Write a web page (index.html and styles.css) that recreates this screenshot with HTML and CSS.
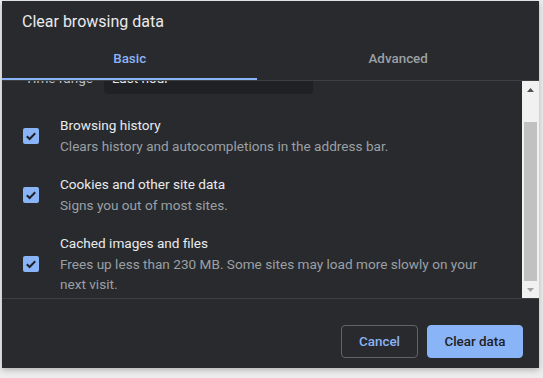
FILE: index.html
```html
<!DOCTYPE html>
<html>
<head>
<meta charset="utf-8">
<link rel="stylesheet" href="styles.css">
</head>
<body>
<div class="dialog">
  <div class="header">Clear browsing data</div>
  <div class="tabs">
    <div class="tab active">Basic</div>
    <div class="tab">Advanced</div>
  </div>
  <div class="scroll-area">
    <div class="viewport">
      <div class="content">
        <div class="time-row">
          <span class="time-label">Time range</span>
          <div class="select">Last hour</div>
        </div>
        <div class="row">
          <svg class="checkbox" width="16" height="16" viewBox="0 0 16 16"><rect x="0" y="0" width="16" height="16" rx="2" fill="#8ab4f8"/><path d="M3.8 8.2 L6.6 11 L12.2 5.2" fill="none" stroke="#202124" stroke-width="2"/></svg>
          <div class="text">
            <div class="title">Browsing history</div>
            <div class="desc">Clears history and autocompletions in the address bar.</div>
          </div>
        </div>
        <div class="row">
          <svg class="checkbox" width="16" height="16" viewBox="0 0 16 16"><rect x="0" y="0" width="16" height="16" rx="2" fill="#8ab4f8"/><path d="M3.8 8.2 L6.6 11 L12.2 5.2" fill="none" stroke="#202124" stroke-width="2"/></svg>
          <div class="text">
            <div class="title">Cookies and other site data</div>
            <div class="desc">Signs you out of most sites.</div>
          </div>
        </div>
        <div class="row">
          <svg class="checkbox" width="16" height="16" viewBox="0 0 16 16"><rect x="0" y="0" width="16" height="16" rx="2" fill="#8ab4f8"/><path d="M3.8 8.2 L6.6 11 L12.2 5.2" fill="none" stroke="#202124" stroke-width="2"/></svg>
          <div class="text">
            <div class="title">Cached images and files</div>
            <div class="desc">Frees up less than 230 MB. Some sites may load more slowly on your next visit.</div>
          </div>
        </div>
      </div>
    </div>
    <div class="scrollbar">
      <div class="sb-btn"><svg width="7" height="4" viewBox="0 0 7 4"><path d="M0 4 L3.5 0 L7 4 Z" fill="#505050"/></svg></div>
      <div class="sb-space"></div>
      <div class="sb-thumb"></div>
      <div class="sb-btn"><svg width="7" height="4" viewBox="0 0 7 4"><path d="M0 0 L7 0 L3.5 4 Z" fill="#a3a3a3"/></svg></div>
    </div>
  </div>
  <div class="footer">
    <button class="btn cancel">Cancel</button>
    <button class="btn primary">Clear data</button>
  </div>
</div>
</body>
</html>
```

FILE: styles.css
```css
html, body {
  margin: 0;
  padding: 0;
}
body {
  background: #ededed;
  font-family: Roboto, "Liberation Sans", sans-serif;
  width: 543px;
  height: 378px;
  overflow: hidden;
}
.dialog {
  margin: 1px 4px 0 2px;
  width: 537px;
  height: 367px;
  background: #292a2d;
  display: flex;
  flex-direction: column;
  box-shadow: 0 2px 6px rgba(0, 0, 0, 0.25);
}
.header {
  height: 36px;
  box-sizing: border-box;
  padding: 10px 0 0 20px;
  font-size: 16px;
  line-height: 22px;
  color: #e8eaed;
}
.tabs {
  display: flex;
  height: 44px;
  box-sizing: border-box;
  border-bottom: 1px solid #3c4043;
}
.tab {
  flex: 1 1 auto;
  display: flex;
  align-items: center;
  justify-content: center;
  padding-top: 2px;
  font-size: 13.4px;
  font-weight: 500;
  color: #9aa0a6;
  border-bottom: 2px solid transparent;
}
.tab.active {
  color: #8ab4f8;
  border-bottom-color: #8ab4f8;
}
.scroll-area {
  display: flex;
  height: 218px;
  box-sizing: border-box;
  border-bottom: 1px solid #3c4043;
}
.viewport {
  flex: 1;
  overflow: hidden;
}
.content {
  margin-top: -19px;
}
.time-row {
  display: flex;
  align-items: center;
  height: 32px;
  margin-bottom: 12px;
  padding-left: 23px;
  font-size: 13.6px;
  color: #e8eaed;
}
.time-label {
  width: 79px;
  color: #bdc1c6;
}
.select {
  width: 209px;
  height: 32px;
  box-sizing: border-box;
  padding-left: 8px;
  display: flex;
  align-items: center;
  background: #202124;
  border-radius: 4px;
}
.row {
  display: flex;
  align-items: center;
  padding: 9px 20px 9px 21px;
}
.checkbox {
  flex: none;
  margin-right: 21px;
}
.text {
  font-size: 13.6px;
}
.title {
  line-height: 20px;
  color: #e8eaed;
}
.desc {
  margin-top: 1px;
  line-height: 20px;
  color: #9aa0a6;
}
.scrollbar {
  width: 17px;
  flex: none;
  background: #f1f1f1;
  display: flex;
  flex-direction: column;
}
.sb-btn {
  height: 17px;
  display: flex;
  align-items: center;
  justify-content: center;
}
.sb-space {
  flex: 1;
}
.sb-thumb {
  height: 159px;
  margin: 0 2px;
  background: #c1c1c1;
}
.footer {
  flex: 1;
  display: flex;
  justify-content: flex-end;
  align-items: flex-start;
  gap: 9px;
  padding: 26px 16px 0 0;
}
.btn {
  height: 33px;
  box-sizing: border-box;
  padding: 0 16px;
  border-radius: 4px;
  font-family: Roboto, "Liberation Sans", sans-serif;
  font-size: 13.4px;
  font-weight: 500;
}
.cancel {
  background: transparent;
  border: 1px solid #5f6368;
  color: #8ab4f8;
  width: 77px;
}
.primary {
  background: #8ab4f8;
  border: 1px solid #8ab4f8;
  color: #202124;
  width: 96px;
}
```
